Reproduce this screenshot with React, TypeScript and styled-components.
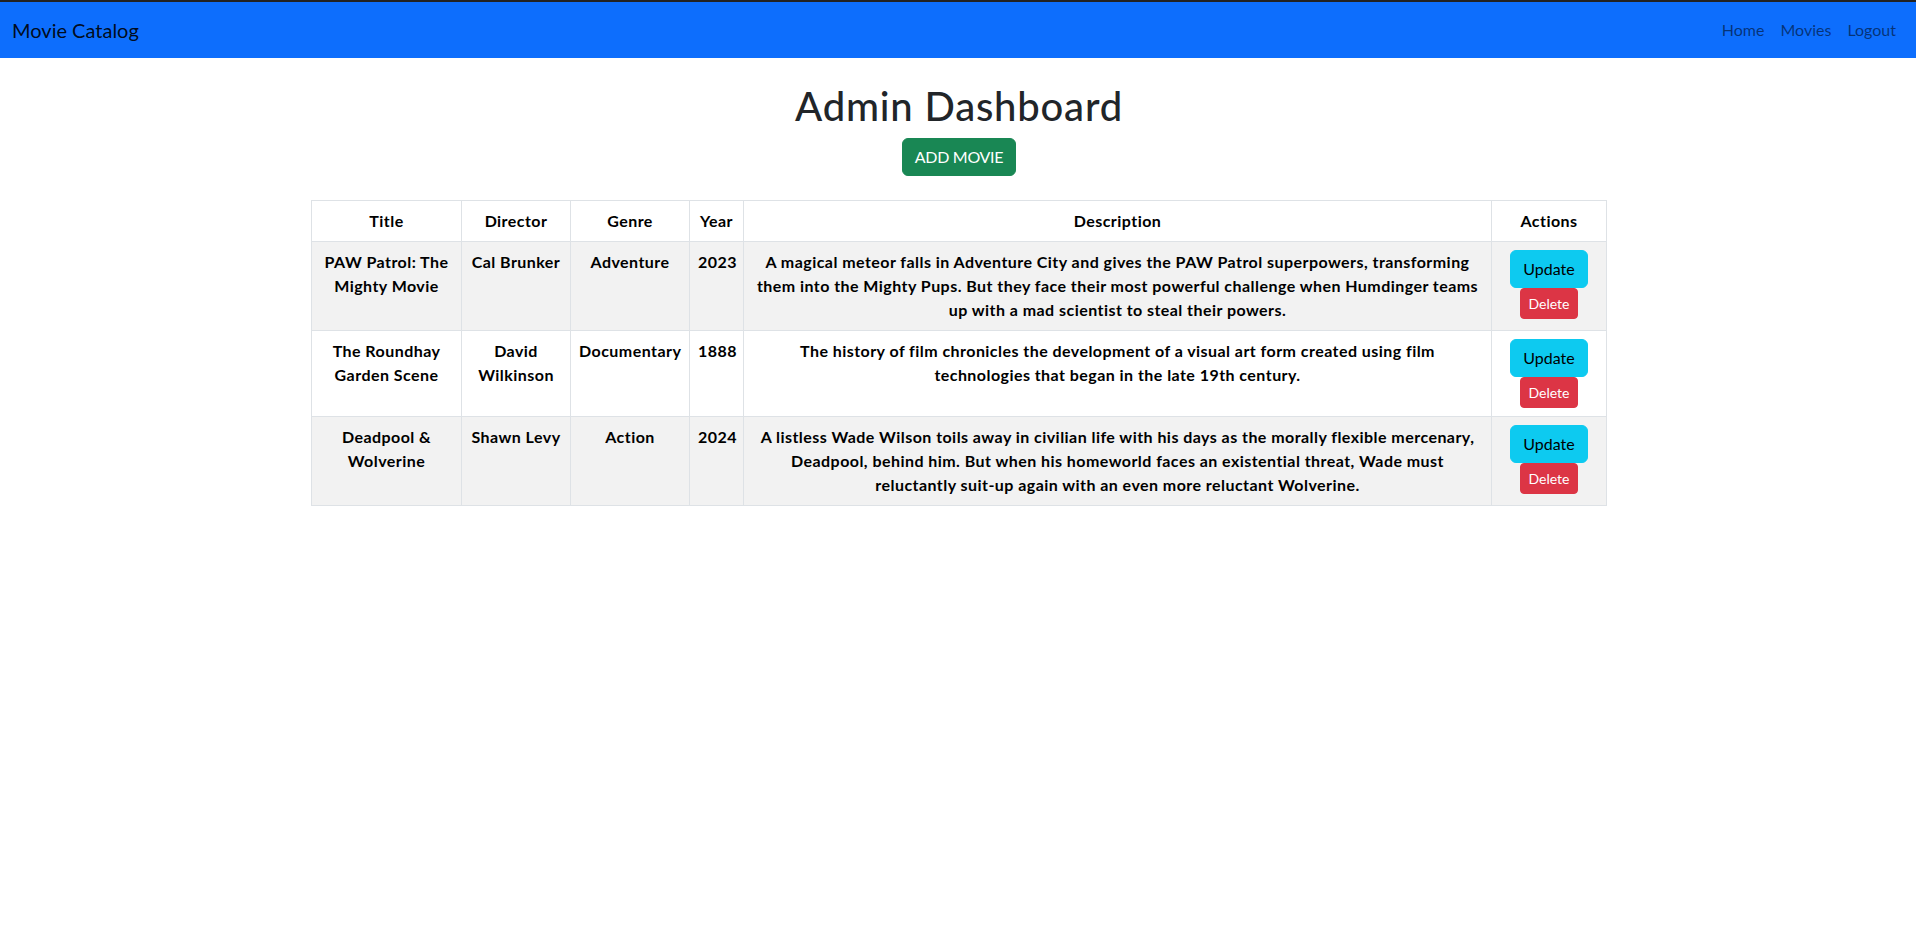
import React from "react";
import styled, { createGlobalStyle } from "styled-components";

const GlobalStyle = createGlobalStyle`
  html, body {
    margin: 0;
    padding: 0;
    background: #ffffff;
  }
  body {
    font-family: "Segoe UI", Lato, "Noto Sans", sans-serif;
    font-size: 16px;
    line-height: 1.5;
    color: #212529;
  }
  * { box-sizing: border-box; }
`;

const Navbar = styled.nav`
  background: #0d6efd;
  border-top: 2px solid #222222;
`;

const NavInner = styled.div`
  display: flex;
  align-items: center;
  justify-content: space-between;
  min-height: 56px;
  padding: 8px 12px;
`;

const Brand = styled.a`
  font-size: 20px;
  line-height: 30px;
  padding: 5px 0;
  color: rgba(0, 0, 0, 0.9);
  text-decoration: none;
`;

const NavLinks = styled.ul`
  display: flex;
  list-style: none;
  margin: 0;
  padding: 0;
`;

const NavLink = styled.a`
  display: block;
  padding: 8px;
  color: rgba(0, 0, 0, 0.55);
  text-decoration: none;
  font-size: 16px;
  line-height: 24px;
`;

const Container = styled.main`
  max-width: 1320px;
  margin: 0 auto;
  padding: 0 11px 0 13px;
  text-align: center;
`;

const Title = styled.h1`
  margin: 24px 0 8px;
  font-size: 40px;
  font-weight: 500;
  line-height: 1.2;
  letter-spacing: 0.8px;
  color: #212529;
`;

const AddButton = styled.button`
  font-family: inherit;
  font-size: 16px;
  line-height: 24px;
  padding: 6px 12px;
  border: 1px solid #198754;
  border-radius: 6px;
  background: #198754;
  color: #ffffff;
  text-transform: uppercase;
  letter-spacing: -0.3px;
  cursor: pointer;
`;

const Table = styled.table`
  width: 100%;
  margin-top: 24px;
  border-collapse: collapse;
  border: 1px solid #dee2e6;
  table-layout: fixed;
`;

const Cell = styled.td<{ $w?: number }>`
  ${(p) => (p.$w ? `width: ${p.$w}px;` : "")}
  padding: 8px;
  border: 1px solid #dee2e6;
  vertical-align: top;
  text-align: center;
  font-weight: 700;
  letter-spacing: 0.45px;
  color: #000000;
`;

const HeadCell = styled(Cell).attrs({ as: "th" })``;

const Row = styled.tr<{ $striped?: boolean }>`
  background: ${(p) => (p.$striped ? "#f2f2f2" : "#ffffff")};
`;

const Actions = styled.div`
  display: flex;
  flex-direction: column;
  align-items: center;
`;

const UpdateButton = styled.button`
  font-family: inherit;
  font-size: 16px;
  line-height: 24px;
  padding: 6px 12px;
  border: 1px solid #0dcaf0;
  border-radius: 6px;
  background: #0dcaf0;
  color: #000000;
  cursor: pointer;
`;

const DeleteButton = styled.button`
  font-family: inherit;
  font-size: 14px;
  line-height: 21px;
  padding: 4px 8px;
  border: 1px solid #dc3545;
  border-radius: 4px;
  background: #dc3545;
  color: #ffffff;
  cursor: pointer;
`;

const movies = [
  {
    title: "PAW Patrol: The Mighty Movie",
    director: "Cal Brunker",
    genre: "Adventure",
    year: 2023,
    description:
      "A magical meteor falls in Adventure City and gives the PAW Patrol superpowers, transforming them into the Mighty Pups. But they face their most powerful challenge when Humdinger teams up with a mad scientist to steal their powers.",
  },
  {
    title: "The Roundhay Garden Scene",
    director: "David Wilkinson",
    genre: "Documentary",
    year: 1888,
    description:
      "The history of film chronicles the development of a visual art form created using film technologies that began in the late 19th century.",
  },
  {
    title: "Deadpool & Wolverine",
    director: "Shawn Levy",
    genre: "Action",
    year: 2024,
    description:
      "A listless Wade Wilson toils away in civilian life with his days as the morally flexible mercenary, Deadpool, behind him. But when his homeworld faces an existential threat, Wade must reluctantly suit-up again with an even more reluctant Wolverine.",
  },
];

export default function App() {
  return (
    <>
      <GlobalStyle />
      <Navbar>
        <NavInner>
          <Brand href="#">Movie Catalog</Brand>
          <NavLinks>
            <li><NavLink href="#">Home</NavLink></li>
            <li><NavLink href="#">Movies</NavLink></li>
            <li><NavLink href="#">Logout</NavLink></li>
          </NavLinks>
        </NavInner>
      </Navbar>
      <Container>
        <Title>Admin Dashboard</Title>
        <AddButton>Add Movie</AddButton>
        <Table>
          <thead>
            <Row>
              <HeadCell $w={150}>Title</HeadCell>
              <HeadCell $w={109}>Director</HeadCell>
              <HeadCell $w={119}>Genre</HeadCell>
              <HeadCell $w={54}>Year</HeadCell>
              <HeadCell>Description</HeadCell>
              <HeadCell $w={115}>Actions</HeadCell>
            </Row>
          </thead>
          <tbody>
            {movies.map((m, i) => (
              <Row key={m.title} $striped={i % 2 === 0}>
                <Cell>{m.title}</Cell>
                <Cell>{m.director}</Cell>
                <Cell>{m.genre}</Cell>
                <Cell>{m.year}</Cell>
                <Cell>{m.description}</Cell>
                <Cell>
                  <Actions>
                    <UpdateButton>Update</UpdateButton>
                    <DeleteButton>Delete</DeleteButton>
                  </Actions>
                </Cell>
              </Row>
            ))}
          </tbody>
        </Table>
      </Container>
    </>
  );
}
